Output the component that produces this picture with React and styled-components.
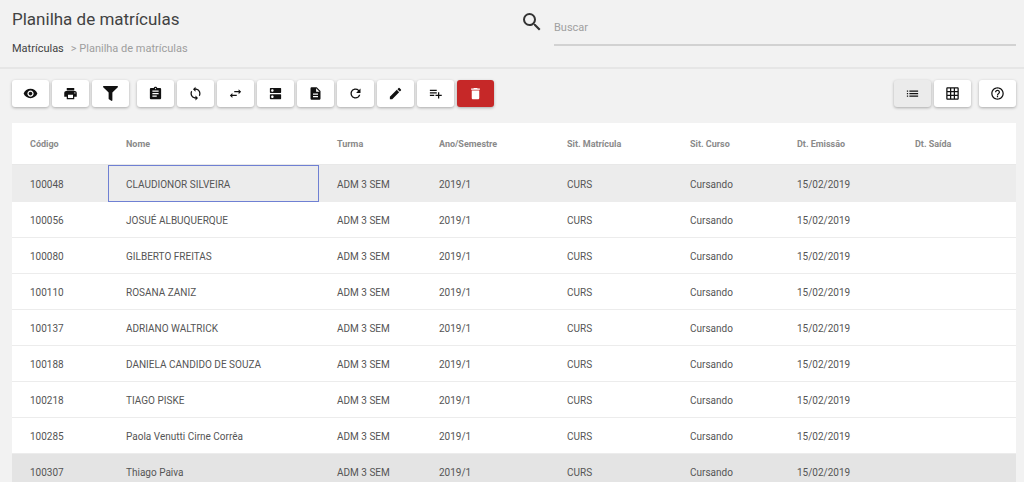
import { useState } from "react";
import styled, { createGlobalStyle } from "styled-components";
import {
  MdVisibility,
  MdPrint,
  MdAssignment,
  MdSync,
  MdSwapHoriz,
  MdDns,
  MdDescription,
  MdRefresh,
  MdEdit,
  MdPlaylistAdd,
  MdDelete,
  MdList,
  MdGridOn,
  MdHelpOutline,
  MdSearch,
} from "react-icons/md";
import { FaFilter } from "react-icons/fa";

const viewActions = [
  { label: "Visualizar", icon: MdVisibility },
  { label: "Imprimir", icon: MdPrint },
  { label: "Filtrar", icon: FaFilter },
];

const editActions = [
  { label: "Ficha", icon: MdAssignment },
  { label: "Sincronizar", icon: MdSync },
  { label: "Transferir", icon: MdSwapHoriz },
  { label: "Registros", icon: MdDns },
  { label: "Documento", icon: MdDescription },
  { label: "Atualizar", icon: MdRefresh },
  { label: "Editar", icon: MdEdit },
  { label: "Adicionar", icon: MdPlaylistAdd },
  { label: "Excluir", icon: MdDelete, danger: true },
];

const columns = [
  { label: "Código", width: 96 },
  { label: "Nome", width: 211 },
  { label: "Turma", width: 102 },
  { label: "Ano/Semestre", width: 128 },
  { label: "Sit. Matrícula", width: 123 },
  { label: "Sit. Curso", width: 107 },
  { label: "Dt. Emissão", width: 118 },
  { label: "Dt. Saída", width: 119 },
];

const students = [
  ["100048", "CLAUDIONOR SILVEIRA"],
  ["100056", "JOSUÉ ALBUQUERQUE"],
  ["100080", "GILBERTO FREITAS"],
  ["100110", "ROSANA ZANIZ"],
  ["100137", "ADRIANO WALTRICK"],
  ["100188", "DANIELA CANDIDO DE SOUZA"],
  ["100218", "TIAGO PISKE"],
  ["100285", "Paola Venutti Cirne Corrêa"],
  ["100307", "Thiago Paiva"],
];

const hovered = "100307";

export default function App() {
  const [selected, setSelected] = useState("100048");
  const [view, setView] = useState("list");
  const [search, setSearch] = useState("");

  return (
    <Page>
      <GlobalStyle />
      <Header>
        <Heading>
          <Title>Planilha de matrículas</Title>
          <Breadcrumb>
            <a href="#matriculas">Matrículas</a>
            <span>&gt; Planilha de matrículas</span>
          </Breadcrumb>
        </Heading>
        <Search>
          <MdSearch size={24} />
          <SearchInput
            type="text"
            aria-label="Buscar"
            placeholder="Buscar"
            value={search}
            onChange={(e) => setSearch(e.target.value)}
          />
        </Search>
      </Header>

      <Toolbar>
        <Group>
          {viewActions.map(({ label, icon: Icon }) => (
            <ToolButton key={label} aria-label={label}>
              <Icon />
            </ToolButton>
          ))}
        </Group>
        <Group>
          {editActions.map(({ label, icon: Icon, danger }) => (
            <ToolButton key={label} aria-label={label} $danger={danger}>
              <Icon />
            </ToolButton>
          ))}
        </Group>
        <Spacer />
        <Group>
          <ToolButton
            aria-label="Lista"
            $active={view === "list"}
            onClick={() => setView("list")}
          >
            <MdList />
          </ToolButton>
          <ToolButton
            aria-label="Grade"
            $active={view === "grid"}
            onClick={() => setView("grid")}
          >
            <MdGridOn />
          </ToolButton>
        </Group>
        <ToolButton aria-label="Ajuda">
          <MdHelpOutline />
        </ToolButton>
      </Toolbar>

      <TableWrapper>
        <Table>
          <thead>
            <tr>
              {columns.map(({ label, width }) => (
                <HeadCell key={label} $width={width}>
                  {label}
                </HeadCell>
              ))}
            </tr>
          </thead>
          <tbody>
            {students.map(([code, name]) => (
              <Row
                key={code}
                $selected={code === selected}
                $hovered={code === hovered}
                onClick={() => setSelected(code)}
              >
                <Cell>{code}</Cell>
                <Cell $focused={code === selected}>{name}</Cell>
                <Cell>ADM 3 SEM</Cell>
                <Cell>2019/1</Cell>
                <Cell>CURS</Cell>
                <Cell>Cursando</Cell>
                <Cell>15/02/2019</Cell>
                <Cell />
              </Row>
            ))}
          </tbody>
        </Table>
      </TableWrapper>
    </Page>
  );
}

const GlobalStyle = createGlobalStyle`
  * {
    box-sizing: border-box;
  }

  body {
    margin: 0;
    background: #f2f2f2;
    color: #424242;
    font-family: Roboto, "Liberation Sans", sans-serif;
  }

  button,
  input {
    font-family: inherit;
  }
`;

const Page = styled.div`
  display: flex;
  flex-direction: column;
  height: 100vh;
`;

const Header = styled.header`
  display: flex;
  padding: 8px 8px 10px 12px;
  border-bottom: 2px solid #e6e6e6;
`;

const Heading = styled.div`
  flex: 1;
`;

const Title = styled.h1`
  margin: 0;
  font-size: 17px;
  line-height: 22px;
  font-weight: 400;
`;

const Breadcrumb = styled.nav`
  display: flex;
  gap: 7px;
  margin-top: 11px;
  font-size: 11px;
  line-height: 16px;
  color: #9e9e9e;

  a {
    color: #424242;
    text-decoration: none;
  }
`;

const Search = styled.label`
  flex: 1;
  display: flex;
  align-items: flex-start;
  gap: 10px;
  padding: 2px 0 0 12px;

  svg {
    flex: none;
    color: #333;
  }
`;

const SearchInput = styled.input`
  flex: 1;
  min-width: 0;
  height: 36px;
  padding: 0;
  border: none;
  border-bottom: 2px solid #d2d2d2;
  outline: none;
  background: transparent;
  color: #424242;
  font-size: 11px;

  &::placeholder {
    color: #a0a0a0;
  }
`;

const Toolbar = styled.div`
  display: flex;
  gap: 8px;
  padding: 11px 8px 16px 12px;
`;

const Group = styled.div`
  display: flex;
  gap: 3px;
`;

const Spacer = styled.div`
  flex: 1;
`;

const ToolButton = styled.button`
  display: flex;
  align-items: center;
  justify-content: center;
  width: 37px;
  height: 27px;
  padding: 0;
  border: none;
  border-radius: 3px;
  cursor: pointer;
  font-size: 15px;
  color: ${({ $danger }) => ($danger ? "#fff" : "#111")};
  background: ${({ $danger, $active }) =>
    $danger ? "#c62828" : $active ? "#ebebeb" : "#fff"};
  box-shadow: 0 1px 3px rgba(0, 0, 0, 0.3);
`;

const TableWrapper = styled.main`
  flex: 1;
  min-height: 0;
  padding: 0 8px 0 12px;
  overflow-y: auto;
  scrollbar-width: none;
`;

const Table = styled.table`
  width: 100%;
  table-layout: fixed;
  border-collapse: separate;
  border-spacing: 0;
  background: #fff;
`;

const HeadCell = styled.th`
  width: ${({ $width }) => $width}px;
  height: 42px;
  padding: 0 18px;
  border-bottom: 1px solid #e8e8e8;
  text-align: left;
  font-size: 9px;
  font-weight: 700;
  color: #8a8a8a;
  white-space: nowrap;
`;

const Row = styled.tr`
  height: ${({ $selected }) => ($selected ? 37 : 36)}px;
  background: ${({ $selected, $hovered }) =>
    $selected ? "#ececec" : $hovered ? "#e4e4e4" : "#fff"};
`;

const Cell = styled.td`
  padding: 2px 18px 0;
  border-bottom: 1px solid #ececec;
  font-size: 10px;
  color: #555;
  white-space: nowrap;
  ${({ $focused }) =>
    $focused && "outline: 1px solid #6f80d3; outline-offset: -1px;"}
`;
